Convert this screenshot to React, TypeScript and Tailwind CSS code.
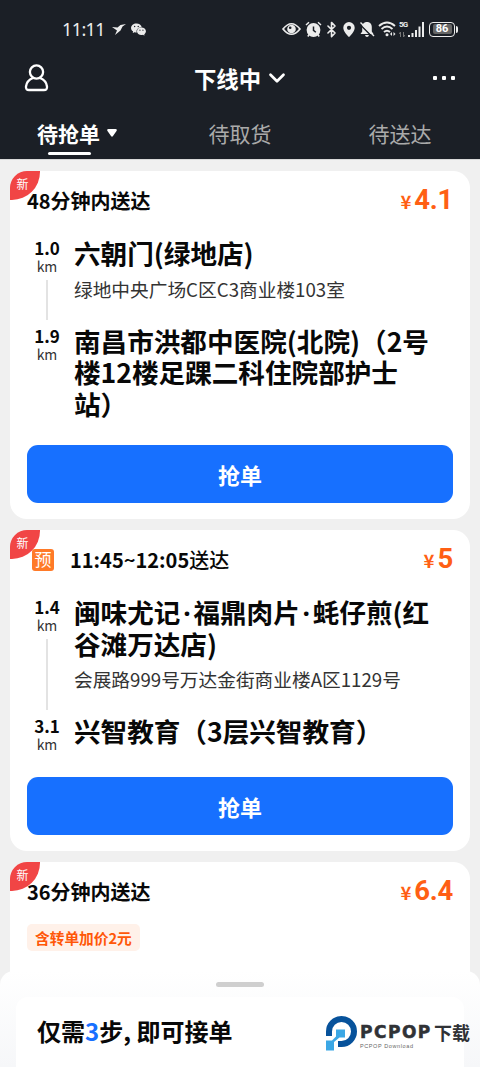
import React from 'react';
import { Bluetooth, ChevronDown } from 'lucide-react';
import { AiFillWechat } from 'react-icons/ai';

interface Stop {
  distance: string;
  title: string[];
  address?: string;
}

interface Order {
  id: number;
  time: React.ReactNode;
  reserved?: boolean;
  price: string;
  tag?: string;
  stops: Stop[];
  actionClass?: string;
}

const orders: Order[] = [
  {
    id: 1,
    time: '48分钟内送达',
    price: '4.1',
    actionClass: 'mt-[26px]',
    stops: [
      { distance: '1.0', title: ['六朝门(绿地店)'], address: '绿地中央广场C区C3商业楼103室' },
      { distance: '1.9', title: ['南昌市洪都中医院(北院)（2号', '楼12楼足踝二科住院部护士', '站）'] },
    ],
  },
  {
    id: 2,
    time: <>11:45~12:05<span className="font-medium">送达</span></>,
    reserved: true,
    price: '5',
    actionClass: 'mt-6',
    stops: [
      { distance: '1.4', title: ['闽味尤记·福鼎肉片·蚝仔煎(红', '谷滩万达店)'], address: '会展路999号万达金街商业楼A区1129号' },
      { distance: '3.1', title: ['兴智教育（3层兴智教育）'] },
    ],
  },
  { id: 3, time: '36分钟内送达', price: '6.4', tag: '含转单加价2元', stops: [] },
];

const StatusBar: React.FC = () => (
  <div className="flex h-[58px] items-center pr-[22px] pl-[62px] text-[#ececec]">
    <span className="w-[50px] font-['Noto_Sans',sans-serif] text-[18px] leading-[20px] tracking-[-0.6px]">11:11</span>
    <svg className="h-[11px] w-[14px]" viewBox="0 0 14 11" fill="currentColor">
      <path d="M0 3 5.500 3.600 8.500 1 14 0 10.500 2.500 8.500 6.500 3 11 5 6.500Z" />
    </svg>
    <AiFillWechat className="ml-1 h-[17px] w-[17px]" />

    <div className="ml-auto flex items-center">
      <svg className="h-[14px] w-[19px]" viewBox="0 0 19 14" fill="none" stroke="currentColor" strokeWidth="1.7">
        <path d="M1 7Q9.500-3.500 18 7Q9.500 17.500 1 7Z" />
        <circle cx="9.500" cy="7" r="4.300" fill="currentColor" stroke="none" />
        <circle cx="8.200" cy="5.700" r="1.300" fill="#1b1f26" stroke="none" />
      </svg>
      <svg className="ml-1 h-[17px] w-[17px]" viewBox="0 0 17 17" fill="none" stroke="currentColor" strokeWidth="1.500">
        <circle cx="8.500" cy="9" r="6.900" fill="currentColor" stroke="none" />
        <path d="M1 4 4 1.300M16 4 13 1.300M4.200 13.500 2.800 15.500M12.800 13.500 14.200 15.500" />
        <path d="M8.500 5.500V9.300L10.800 11.300" stroke="#1b1f26" />
      </svg>
      <Bluetooth className="ml-px h-[17px] w-[17px]" strokeWidth={2.2} />
      <svg className="ml-[3px] h-[15px] w-[12px]" viewBox="0 0 12 15">
        <path fill="currentColor" fillRule="evenodd" d="M6 0a5.700 5.700 0 0 1 5.700 5.700C11.700 9 8.500 12.700 6 15 3.500 12.700.3 9 .3 5.700A5.700 5.700 0 0 1 6 0Zm0 3.700a2.100 2.100 0 1 0 0 4.200 2.100 2.100 0 0 0 0-4.200Z" />
      </svg>
      <svg className="ml-1 h-[17px] w-[16px]" viewBox="0 0 16 17">
        <path fill="currentColor" d="M8 1c3.200 0 4.800 2.300 4.800 5v4.500L14.500 13h-13l1.700-2.500V6C3.200 3.300 4.800 1 8 1ZM6 14h4q-.5 2-2 2t-2-2Z" />
        <path d="M0 2.500 14 16.500" stroke="#1b1f26" strokeWidth="1.500" />
        <path d="M1.500 1.500 15 15" stroke="currentColor" strokeWidth="1.400" />
      </svg>
      <svg className="ml-[3px] h-[16px] w-[19px]" viewBox="0 0 19 16" fill="none" stroke="currentColor" strokeWidth="1.900">
        <path d="M1 5Q9-2 17 5M3.500 8Q9 3.200 14.500 8M6 11Q9 8.300 12 11" />
        <circle cx="9" cy="13.700" r="1.500" fill="currentColor" stroke="none" />
        <path d="m14 11-2 2 2 2ZM15.500 11l2 2-2 2Z" fill="currentColor" stroke="none" />
      </svg>
      <div className="ml-[2px] flex h-[16px] items-end">
        <div className="flex w-[8px] flex-col items-start justify-between self-stretch">
          <span className="font-['Roboto',sans-serif] text-[8px] leading-[8px] font-bold tracking-[-0.8px]">5G</span>
          <svg className="h-[5px] w-[6px]" viewBox="0 0 6 5" stroke="#777" fill="none">
            <path d="M1.500 5V0L0 2M4.500 0V5L6 3" />
          </svg>
        </div>
        <svg className="h-[15px] w-[17px]" viewBox="0 0 17 15" fill="currentColor">
          <path d="M1 13h2v2H1zM4.500 11h2v4h-2zM8 8h2v7H8zM11.500 4.500h2V15h-2zM15 0h2v15h-2z" />
        </svg>
      </div>
      <div className="ml-[5px] flex h-[15px] w-[26px] items-center justify-center rounded-[4px] border-[1.5px] border-[#ececec]">
        <span className="flex h-[10px] w-[19px] items-center justify-center rounded-[2px] bg-[#666] font-['Roboto',sans-serif] text-[11px] leading-[10px] font-bold text-white">86</span>
      </div>
      <span className="ml-px h-[7px] w-[2px] rounded-r bg-[#ececec]" />
    </div>
  </div>
);

const TopNav: React.FC = () => (
  <header className="h-[160px] border-b border-[#d8d8d8] bg-[#1b1f26] text-white">
    <StatusBar />
    <div className="flex h-[39px] items-center justify-between pr-[25px] pl-[24px]">
      <svg className="h-[28px] w-[25px]" viewBox="0 0 25 28" fill="none" stroke="currentColor" strokeWidth="2.300">
        <circle cx="12.500" cy="8" r="6.600" />
        <path d="M9 14C5.500 15.300 2.500 18.500 2 22.500 1.700 25 2.800 26 5 26h15c2.200 0 3.300-1 3-3.500-.5-4-3.500-7.200-7-8.500" />
      </svg>
      <div className="flex items-center gap-[4px] pl-[2px]">
        <h1 className="text-[22.4px] leading-8 font-bold">下线中</h1>
        <ChevronDown className="h-[26px] w-[26px] -ml-px" strokeWidth={2.5} />
      </div>
      <div className="flex gap-[5px]">
        <i className="h-1 w-1 rounded-[1px] bg-white" />
        <i className="h-1 w-1 rounded-[1px] bg-white" />
        <i className="h-1 w-1 rounded-[1px] bg-white" />
      </div>
    </div>
    <nav className="grid grid-cols-3 pt-5 text-[21px] leading-[32px] text-[#aaa]">
      <div className="pl-[37px]">
        <div className="flex items-center gap-[7px] font-bold text-white">
          待抢单
          <svg className="h-[8px] w-[10px]" viewBox="0 0 10 8" fill="currentColor">
            <path d="M1.500 0h7Q10.500.3 9.500 2L6 7Q5 8.500 4 7L.5 2Q-.5.3 1.500 0Z" />
          </svg>
        </div>
        <div className="mt-[3px] ml-[11px] h-[3px] w-[43px] rounded-full bg-white" />
      </div>
      <div className="text-center">待取货</div>
      <div className="text-center">待送达</div>
    </nav>
  </header>
);

// the CJK middle dot is full width, so it gets a narrow box of its own
const TitleLine: React.FC<{ text: string }> = ({ text }) => (
  <span className="block">
    {text.split('·').map((part, i) => (
      <React.Fragment key={part}>
        {i > 0 && <span className="inline-block w-[13px] text-center font-['Noto_Sans',sans-serif] leading-none">·</span>}
        {part}
      </React.Fragment>
    ))}
  </span>
);

const StopRow: React.FC<{ stop: Stop; last: boolean }> = ({ stop, last }) => (
  <div className="flex gap-[7px]">
    <div className="flex w-10 shrink-0 flex-col items-center">
      <span className="text-[17px] leading-5 font-bold">{stop.distance}</span>
      <span className="text-[14px] leading-[17px] text-[#333]">km</span>
      {!last && <div className="mt-[5px] mb-[6px] w-[2px] flex-1 bg-[#e3e3e3]" />}
    </div>
    <div className={last ? '-mt-px' : '-mt-px pb-[23px]'}>
      <h2 className="text-[26.6px] leading-[31.5px] font-bold whitespace-nowrap">
        {stop.title.map(line => <TitleLine key={line} text={line} />)}
      </h2>
      {stop.address && <p className="mt-[6px] text-[18.7px] leading-7 whitespace-nowrap text-[#333]">{stop.address}</p>}
    </div>
  </div>
);

const OrderCard: React.FC<{ order: Order }> = ({ order }) => (
  <article className="relative rounded-[17px] bg-white px-[17px] pb-4">
    <div className="absolute top-0 left-0 flex h-[29px] w-[30px] items-center justify-center rounded-tl-[17px] rounded-br-[28px] bg-[#f14545] pr-[5px] pb-[4px] text-[12px] text-white">
      新
    </div>
    <div className="flex h-[60px] items-center">
      {order.reserved && (
        <span className="relative mr-4 ml-[5px] flex h-[22px] w-[22px] justify-center rounded-[3px] bg-[#ff7a28] text-[17px] leading-[20px] text-white">预</span>
      )}
      <span className="relative text-[20px] font-bold">{order.time}</span>
      <div className="mb-[3px] ml-auto flex items-baseline gap-[3px] font-bold text-[#ff5f14]">
        <span className="text-[18.5px] leading-6">¥</span>
        <span className="font-['Roboto',sans-serif] text-[27.5px] leading-10 tracking-[-0.3px]">{order.price}</span>
      </div>
    </div>
    {order.tag && (
      <div className="h-[70px] pt-[2px]">
        <span className="inline-block rounded-[5px] bg-[#fff1e9] px-[8px] text-[14.7px] leading-[27px] font-bold text-[#ff5708]">{order.tag}</span>
      </div>
    )}
    {order.stops.length > 0 && (
      <>
        <div className="mt-[7px]">
          {order.stops.map((stop, i) => (
            <StopRow key={stop.distance} stop={stop} last={i === order.stops.length - 1} />
          ))}
        </div>
        <button className={`block h-[58px] w-full rounded-[11px] bg-[#1770ff] text-[22px] font-bold text-white ${order.actionClass}`}>抢单</button>
      </>
    )}
  </article>
);

const Brand: React.FC = () => (
  <div className="absolute top-[45px] left-[326px] flex text-[#303236]">
    <svg className="h-[36px] w-[31px]" viewBox="0 0 31 36">
      <path d="M3 20V15.500A12.500 12.500 0 1 1 15.500 28H12" fill="none" stroke="#07529b" strokeWidth="6" />
      <path d="M10 13.500h9v8h-5.500L8 26v8.500H0v-10h6l4-4Z" fill="#3ba7e5" />
    </svg>
    <div className="ml-[3px] pt-[7px]">
      <div className="flex h-[19px] items-center whitespace-nowrap">
        <span className="w-[74px] font-['DejaVu_Sans',sans-serif] text-[17px] leading-[19px] font-bold tracking-[1.5px] [-webkit-text-stroke:0.5px]">PCPOP</span>
        <span className="text-[18px] leading-[19px] font-bold">下载</span>
      </div>
      <div className="pt-px font-['Liberation_Sans',sans-serif] text-[5.5px] leading-[6px] tracking-[0.6px] text-[#666]">PCPOP Download</div>
    </div>
  </div>
);

const BottomSheet: React.FC = () => (
  <section className="absolute inset-x-0 bottom-0 h-24 rounded-t-[14px] bg-linear-to-b from-white to-[#f6f7f9] px-4 pt-[11px]">
    <div className="mx-auto h-[5px] w-12 rounded-full bg-[#cfcfcf]" />
    <div className="mt-[10px] h-[70px] rounded-t-[12px] bg-white px-[21px] pt-[18px] text-[24px] leading-8 font-bold">
      仅需<span className="text-[#1770ff]">3</span>步, 即可接单
    </div>
    <Brand />
  </section>
);

export default function App() {
  return (
    <div className="relative h-[1067px] w-[480px] overflow-hidden bg-[#f0f0f0] font-['Noto_Sans_CJK_SC',sans-serif] text-[#080808]">
      <TopNav />
      <main className="flex flex-col gap-[11px] px-[10px] pt-[11px]">
        {orders.map(order => <OrderCard key={order.id} order={order} />)}
      </main>
      <BottomSheet />
    </div>
  );
}
